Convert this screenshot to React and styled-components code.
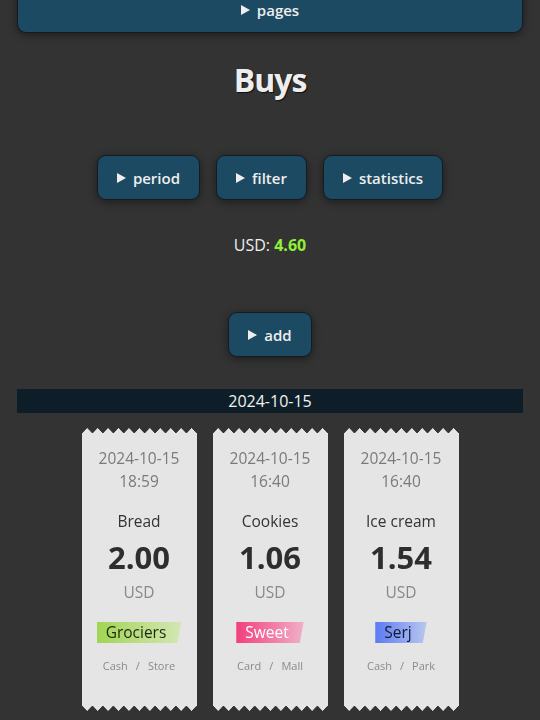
import React from "react";
import styled, { createGlobalStyle } from "styled-components";

const Global = createGlobalStyle`
  html, body { margin: 0; padding: 0; background: #333333; }
  body { font-family: "Open Sans", "Noto Sans", sans-serif; color: #eeeeee; overflow: hidden; }
  * { box-sizing: border-box; }
`;

const Page = styled.div`
  display: flex;
  flex-direction: column;
  align-items: center;
  padding: 0 17px;
`;

const Button = styled.button`
  display: inline-flex;
  align-items: center;
  justify-content: center;
  gap: 7px;
  height: 45px;
  padding: 0 19px;
  background: #1c4a63;
  color: #eeeeee;
  border: 1px solid #141c22;
  border-radius: 9px;
  box-shadow: 0 2px 8px rgba(0, 0, 0, 0.45);
  font-family: "Open Sans", "Noto Sans", sans-serif;
  font-weight: 600;
  font-size: 15px;
  cursor: pointer;
  ${(p) => p.$wide && `width: 100%; margin-top: -12px; border-radius: 0 0 9px 9px; border-top: none;`}
`;

const Marker = styled.span`
  width: 0;
  height: 0;
  border-top: 5.5px solid transparent;
  border-bottom: 5.5px solid transparent;
  border-left: 9px solid #eeeeee;
`;

const Title = styled.h1`
  margin: 25px 0 0;
  font-size: 32px;
  line-height: 44px;
  font-weight: 700;
  letter-spacing: -1px;
  color: #eeeeee;
  text-shadow: 1px 1px 1px #111;
`;

const ButtonRow = styled.div`
  display: flex;
  gap: 16px;
  margin-top: 53px;
`;

const Total = styled.div`
  margin-top: 34px;
  font-size: 16px;
  line-height: 22px;
`;

const Amount = styled.span`
  color: #8ff03a;
  font-weight: 700;
`;

const AddWrap = styled.div`
  margin-top: 56px;
`;

const DateBar = styled.div`
  align-self: stretch;
  margin-top: 32px;
  height: 24px;
  background: #0e1e28;
  text-align: center;
  font-size: 16px;
  line-height: 24px;
  color: #f2f2f2;
`;

const Cards = styled.div`
  display: flex;
  gap: 16px;
  margin-top: 15px;
`;

const Receipt = styled.div`
  width: 115px;
  height: 283px;
  display: flex;
  flex-direction: column;
  align-items: center;
  background: #e5e5e5;
  padding-top: 19px;
  color: #333333;
  -webkit-mask:
    conic-gradient(from 135deg at 50% 0, #000 90deg, #0000 0) top left / 10.45px 6px repeat-x,
    conic-gradient(from -45deg at 50% 100%, #000 90deg, #0000 0) bottom left / 10.45px 6px repeat-x,
    linear-gradient(#000 0 0) center / 100% calc(100% - 12px) no-repeat;
  mask:
    conic-gradient(from 135deg at 50% 0, #000 90deg, #0000 0) top left / 10.45px 6px repeat-x,
    conic-gradient(from -45deg at 50% 100%, #000 90deg, #0000 0) bottom left / 10.45px 6px repeat-x,
    linear-gradient(#000 0 0) center / 100% calc(100% - 12px) no-repeat;
`;

const Stamp = styled.div`
  font-size: 15.5px;
  line-height: 23px;
  color: #7a7a7a;
  text-align: center;
`;

const Name = styled.div`
  margin-top: 16px;
  font-size: 15.5px;
  line-height: 24px;
  color: #333333;
`;

const Price = styled.div`
  margin-top: 4px;
  font-size: 31px;
  line-height: 40px;
  font-weight: 700;
  color: #2e2e2e;
`;

const Currency = styled.div`
  margin-top: 4px;
  font-size: 15.5px;
  line-height: 22px;
  color: #888888;
`;

const Tag = styled.span`
  margin-top: 19px;
  height: 21px;
  padding: 0 15px 0 9px;
  font-size: 15.5px;
  line-height: 21px;
  color: ${(p) => p.$text};
  background: linear-gradient(90deg, ${(p) => p.$from}, ${(p) => p.$to});
  clip-path: polygon(0 0, 100% 0, calc(100% - 4px) 100%, 0 100%);
`;

const Footer = styled.div`
  margin-top: 14px;
  display: flex;
  gap: 8px;
  font-size: 11px;
  line-height: 18px;
  color: #8a8a8a;
`;

const tags = {
  Grociers: { from: "#a2d552", to: "#d3e7b4", text: "#1d2a10" },
  Sweet: { from: "#f23e7c", to: "#f1b0c8", text: "#ffffff" },
  Serj: { from: "#5c7af2", to: "#bac7f0", text: "#111a33" },
};

const items = [
  { time: "18:59", name: "Bread", price: "2.00", tag: "Grociers", pay: "Cash", place: "Store" },
  { time: "16:40", name: "Cookies", price: "1.06", tag: "Sweet", pay: "Card", place: "Mall" },
  { time: "16:40", name: "Ice cream", price: "1.54", tag: "Serj", pay: "Cash", place: "Park" },
];

const Toggle = ({ children, wide }) => (
  <Button $wide={wide}>
    <Marker />
    {children}
  </Button>
);

export default function App() {
  return (
    <>
      <Global />
      <Page>
        <Toggle wide>pages</Toggle>
        <Title>Buys</Title>
        <ButtonRow>
          <Toggle>period</Toggle>
          <Toggle>filter</Toggle>
          <Toggle>statistics</Toggle>
        </ButtonRow>
        <Total>
          USD: <Amount>4.60</Amount>
        </Total>
        <AddWrap>
          <Toggle>add</Toggle>
        </AddWrap>
        <DateBar>2024-10-15</DateBar>
        <Cards>
          {items.map((it) => {
            const t = tags[it.tag];
            return (
              <Receipt key={it.name}>
                <Stamp>
                  2024-10-15
                  <br />
                  {it.time}
                </Stamp>
                <Name>{it.name}</Name>
                <Price>{it.price}</Price>
                <Currency>USD</Currency>
                <Tag $from={t.from} $to={t.to} $text={t.text}>
                  {it.tag}
                </Tag>
                <Footer>
                  <span>{it.pay}</span>
                  <span>/</span>
                  <span>{it.place}</span>
                </Footer>
              </Receipt>
            );
          })}
        </Cards>
      </Page>
    </>
  );
}
